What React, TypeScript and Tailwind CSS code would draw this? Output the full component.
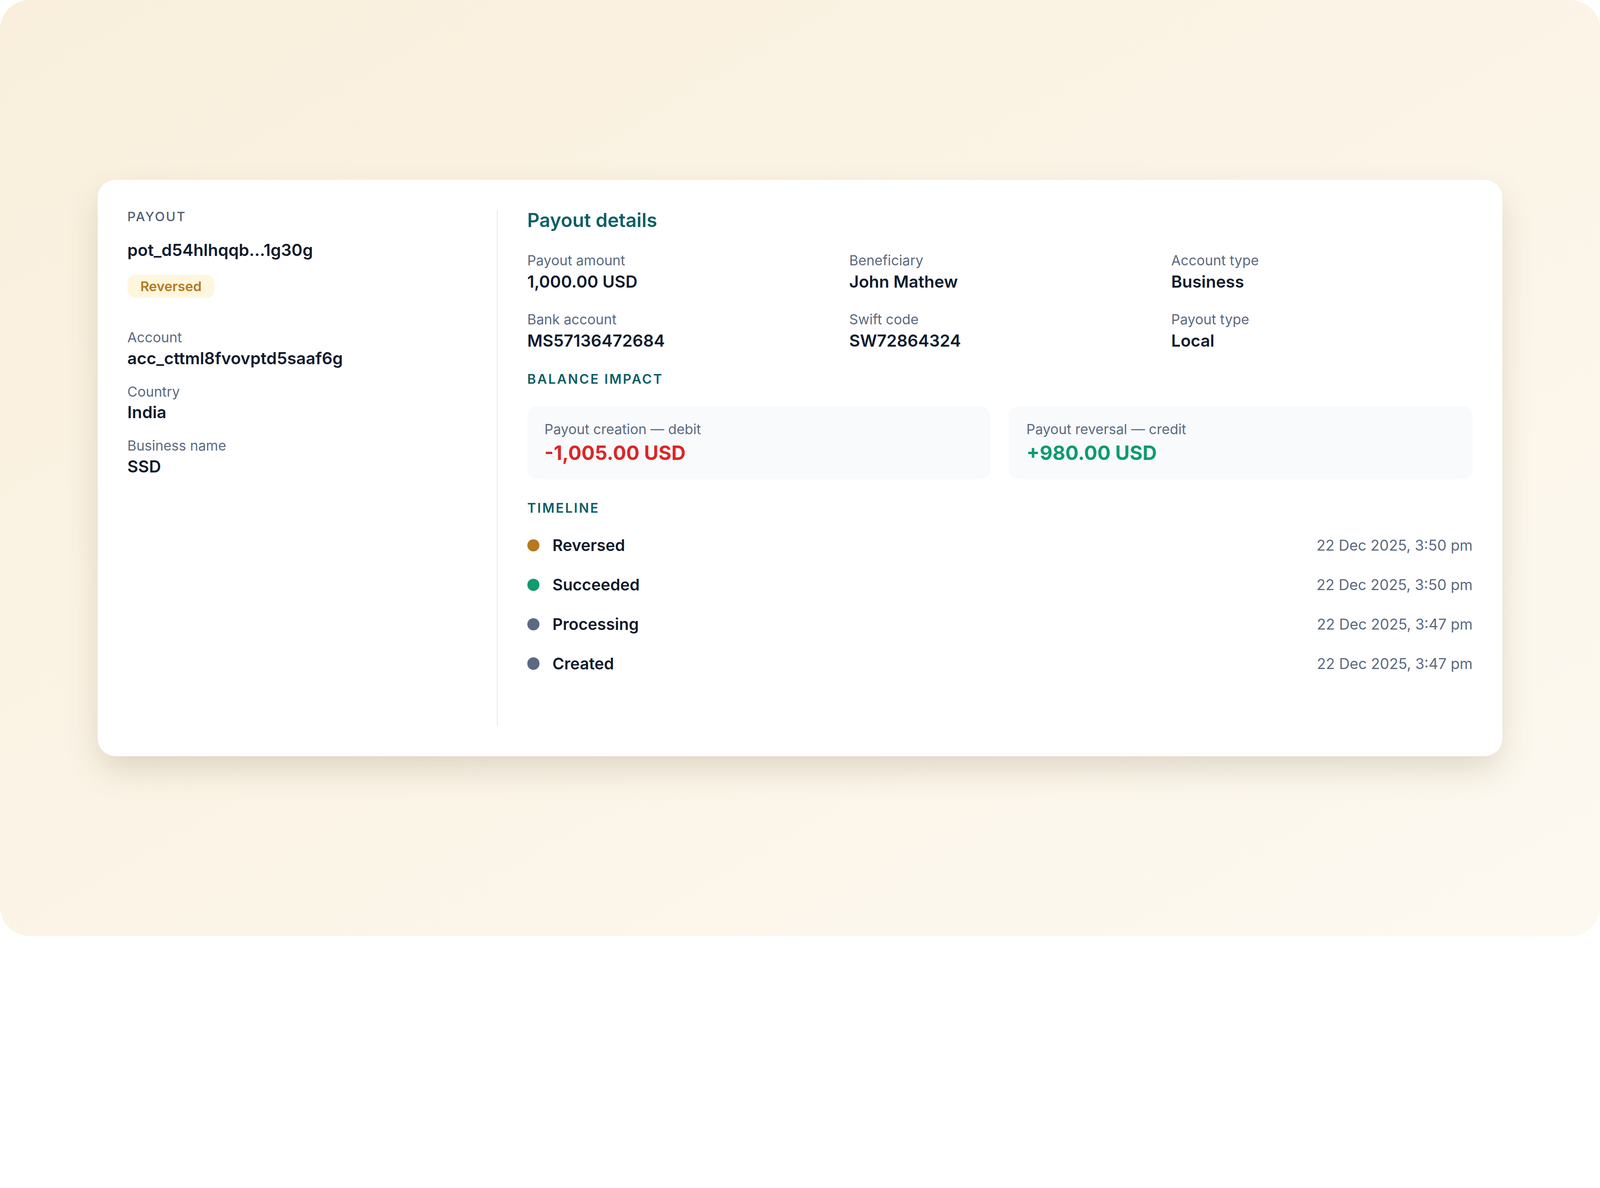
// Payout detail card
const FONT = { fontFamily: 'Inter, "Noto Sans", sans-serif' };

const SUMMARY = [
  { label: 'Payout amount', value: '1,000.00 USD' },
  { label: 'Beneficiary', value: 'John Mathew' },
  { label: 'Account type', value: 'Business' },
  { label: 'Bank account', value: 'MS57136472684' },
  { label: 'Swift code', value: 'SW72864324' },
  { label: 'Payout type', value: 'Local' },
];

const ACCOUNT = [
  { label: 'Account', value: 'acc_cttml8fvovptd5saaf6g' },
  { label: 'Country', value: 'India' },
  { label: 'Business name', value: 'SSD' },
];

const TIMELINE = [
  { status: 'Reversed', at: '22 Dec 2025, 3:50 pm', dot: 'bg-[#b7791f]' },
  { status: 'Succeeded', at: '22 Dec 2025, 3:50 pm', dot: 'bg-[#0f9b6c]' },
  { status: 'Processing', at: '22 Dec 2025, 3:47 pm', dot: 'bg-[#5b6a80]' },
  { status: 'Created', at: '22 Dec 2025, 3:47 pm', dot: 'bg-[#5b6a80]' },
];

const Field = ({ label, value }: { label: string; value: string }) => (
  <div className="flex flex-col gap-[7px]">
    <span className="text-[45px] leading-[56px] text-[#5b6a80]">{label}</span>
    <span className="text-[54px] leading-[64px] font-semibold text-[#0f1b2d]">{value}</span>
  </div>
);

const SectionTitle = ({ children }: { children: string }) => (
  <h4 className="text-[43px] leading-[48px] font-semibold tracking-[0.1em] text-[#0e5f66]">
    {children}
  </h4>
);

export default function App() {
  // the layout is drawn for a 5200px wide frame; fit it to whatever the viewport is
  const fit = typeof window !== 'undefined' ? window.innerWidth / 5200 : 1;

  return (
    <div className="bg-white" style={{ ...FONT, zoom: fit }}>
      <div className="h-[3040px] w-[5200px] overflow-hidden rounded-[96px] bg-gradient-to-br from-[#f9efdc] to-[#fdf9f1] px-[318px] pt-[584px]">
        <div className="rounded-[58px] bg-white p-[96px] shadow-[0_48px_110px_-10px_rgba(100,80,40,0.2)]">
          <div className="flex h-[1680px]">
            {/* ─── Left: payout summary ─── */}
            <div className="flex w-[1201px] shrink-0 flex-col pr-[96px]">
              <span className="text-[42px] leading-[48px] font-medium tracking-[0.09em] text-[#526077]">
                PAYOUT
              </span>
              <span className="mt-[53px] text-[54px] leading-[64px] font-semibold text-[#0f1b2d]">
                pot_d54hlhqqb...1g30g
              </span>
              <div className="mt-[47px] flex">
                <span className="rounded-[26px] bg-[#fef6dd] px-[42px] text-[44px] leading-[76px] font-semibold text-[#b7791f]">
                  Reversed
                </span>
              </div>
              <div className="mt-[101px] flex flex-col gap-[49px]">
                {ACCOUNT.map((f) => (
                  <Field key={f.label} label={f.label} value={f.value} />
                ))}
              </div>
            </div>

            {/* ─── Right: details ─── */}
            <div className="flex flex-1 flex-col border-l-[3px] border-[#e3e8ef] pl-[96px]">
              <h3 className="text-[62px] leading-[72px] font-semibold text-[#0e5f66]">Payout details</h3>

              <div className="mt-[67px] grid grid-cols-3 gap-x-[67px] gap-y-[64px]">
                {SUMMARY.map((f) => (
                  <div key={f.label} className="flex flex-col gap-[8px]">
                    <span className="text-[45px] leading-[56px] text-[#5b6a80]">{f.label}</span>
                    <span className="text-[54px] leading-[64px] font-semibold text-[#0f1b2d]">{f.value}</span>
                  </div>
                ))}
              </div>

              <div className="mt-[68px]">
                <SectionTitle>BALANCE IMPACT</SectionTitle>
              </div>
              <div className="mt-[64px] grid grid-cols-2 gap-x-[60px]">
                <div className="flex flex-col gap-[10px] rounded-[32px] bg-[#f8fafc] px-[56px] pt-[48px] pb-[49px]">
                  <span className="text-[45px] leading-[56px] text-[#5b6a80]">Payout creation — debit</span>
                  <span className="text-[64px] leading-[76px] font-bold text-[#dc2626]">-1,005.00 USD</span>
                </div>
                <div className="flex flex-col gap-[10px] rounded-[32px] bg-[#f8fafc] px-[56px] pt-[48px] pb-[49px]">
                  <span className="text-[45px] leading-[56px] text-[#5b6a80]">Payout reversal — credit</span>
                  <span className="text-[64px] leading-[76px] font-bold text-[#0f9b6c]">+980.00 USD</span>
                </div>
              </div>

              <div className="mt-[69px]">
                <SectionTitle>TIMELINE</SectionTitle>
              </div>
              <ul className="mt-[65px] flex flex-col gap-[64px]">
                {TIMELINE.map((t) => (
                  <li key={t.status} className="flex items-center justify-between">
                    <div className="flex items-center gap-[42px]">
                      <span className={`h-[40px] w-[40px] rounded-full ${t.dot}`} />
                      <span className="text-[52px] leading-[64px] font-semibold text-[#0f1b2d]">{t.status}</span>
                    </div>
                    <span className="text-[48px] leading-[64px] text-[#5b6a80]">{t.at}</span>
                  </li>
                ))}
              </ul>
            </div>
          </div>
        </div>
      </div>
    </div>
  );
}
